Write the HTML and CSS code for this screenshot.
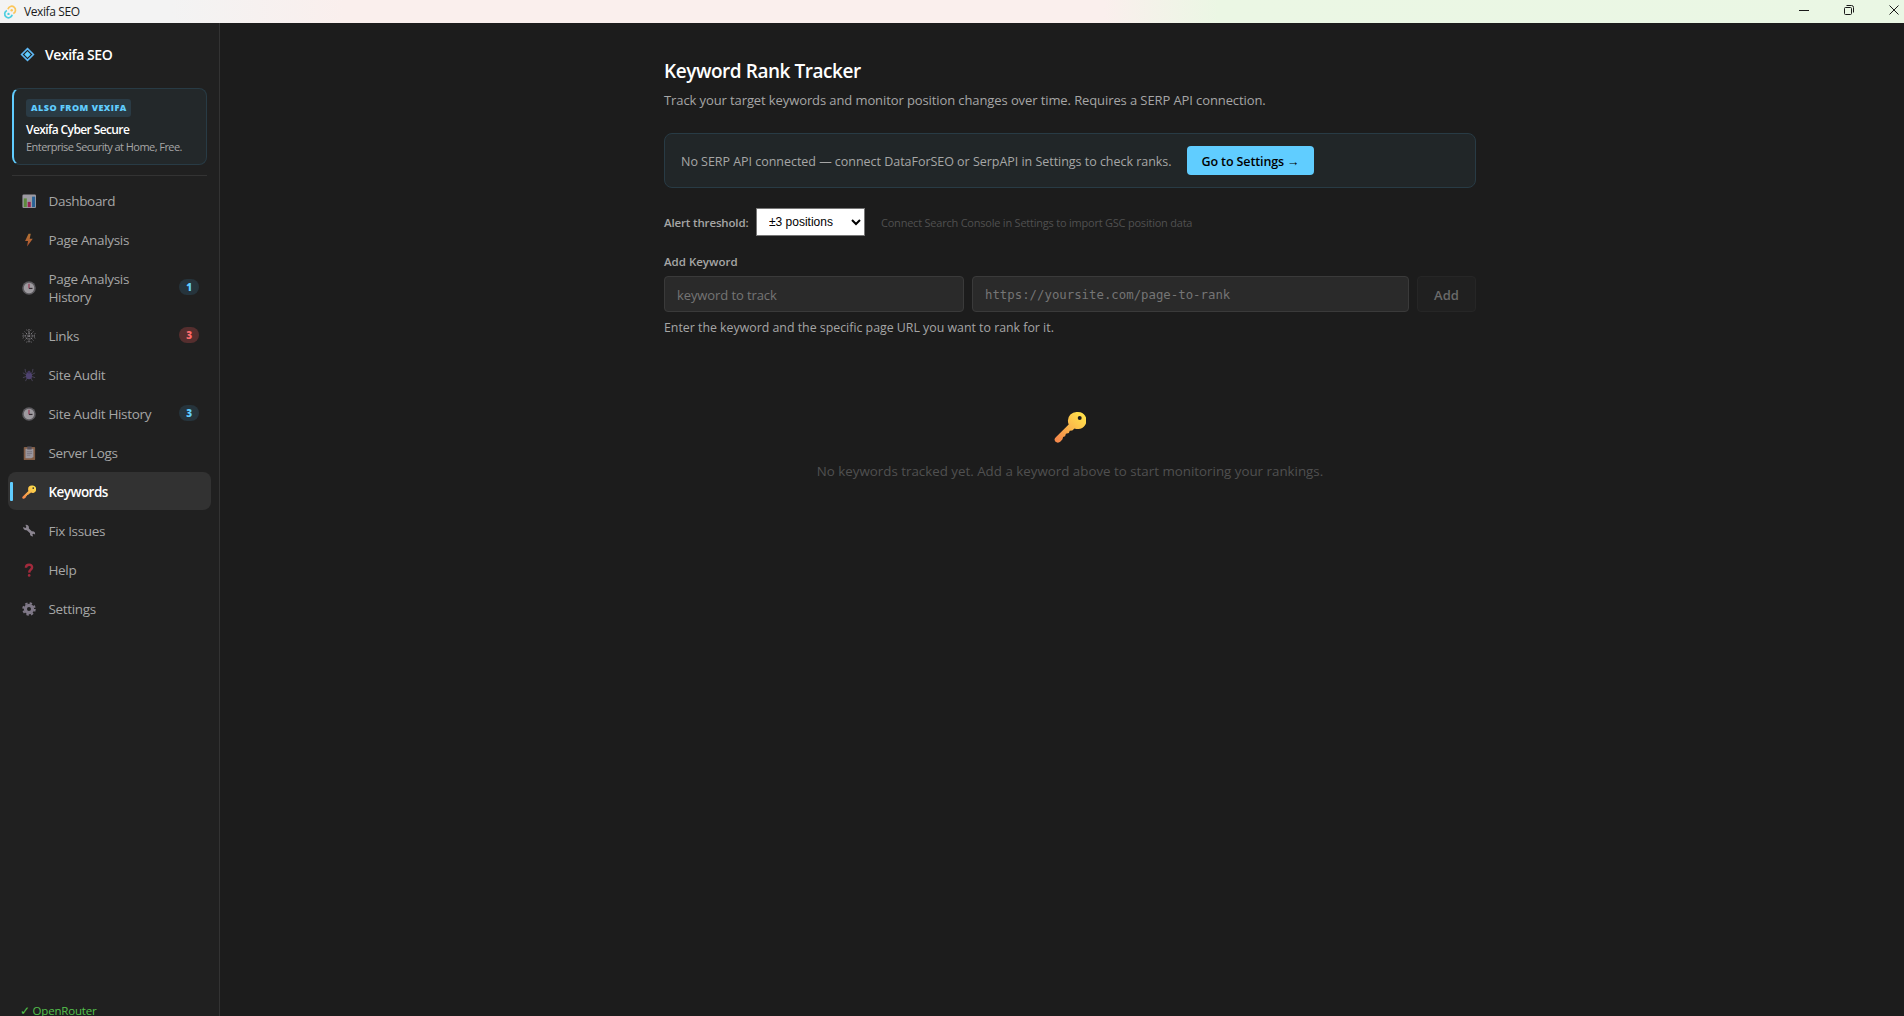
FILE: index.html
```html
<!DOCTYPE html>
<html lang="en">
<head>
    <meta charset="UTF-8">
    <meta name="viewport" content="width=device-width, initial-scale=1.0">
    <title>Vexifa SEO</title>
    <link rel="stylesheet" href="styles.css">
</head>
<body>
    <!-- Shared icons -->
    <svg class="sprite" aria-hidden="true">
        <defs>
            <linearGradient id="key-fill" x1="1" y1="0" x2="0" y2="1">
                <stop offset="0.1" stop-color="#ffe04a"/>
                <stop offset="0.5" stop-color="#fbb84b"/>
                <stop offset="0.9" stop-color="#f58a4b"/>
            </linearGradient>
            <linearGradient id="bolt-fill" x1="0" y1="0" x2="0" y2="1">
                <stop offset="0" stop-color="#ffa03e"/>
                <stop offset="1" stop-color="#ff6f3d"/>
            </linearGradient>
            <symbol id="i-key" viewBox="0 0 32 32">
                <path fill="url(#key-fill)" fill-rule="evenodd" d="M22.5 1a8.6 8.6 0 0 0-8.6 8.6c0 1.5.2 2.6.8 3.9L1.8 26.2A3.3 3.3 0 0 0 1.5 30.8c1.4 1.2 3.7 1.1 5-.3l2-2.2.6-2.3 2-.8.8-2.4 3-.8.8-2.2 2.6-.2 2.2-2.2a8.600 8.600 0 1 0 2-16.400zm3.200 4a2 2 0 1 1 0 4 2 2 0 0 1 0-4z"/>
            </symbol>
            <symbol id="i-clock" viewBox="0 0 16 16">
                <circle cx="8" cy="8" r="7.8" fill="#7d7a80"/>
                <circle cx="8" cy="8" r="6" fill="#e0dce4"/>
                <path d="M8 3v5.5" stroke="#d0305c" stroke-width="1.2"/>
                <path d="M8 8.5h4" stroke="#40363e" stroke-width="1.4"/>
            </symbol>
        </defs>
    </svg>

    <header class="titlebar">
        <svg class="app-icon" viewBox="0 0 14 16">
            <path d="M5 5.200A3.800 3.800 0 1 1 10.300 9.500" fill="none" stroke="#fbc65a" stroke-width="1.700"/>
            <circle cx="8.700" cy="6.200" r="1.200" fill="#fbc65a"/>
            <path d="M9.200 10.800A3.800 3.800 0 1 1 3.900 6.500" fill="none" stroke="#4dcfe0" stroke-width="1.700"/>
            <circle cx="5.500" cy="9.900" r="1.200" fill="#4dcfe0"/>
        </svg>
        <span class="app-title">Vexifa SEO</span>
        <div class="window-controls">
            <svg viewBox="0 0 12 12"><path d="M1 6.500h10"/></svg>
            <svg viewBox="0 0 12 12"><rect x="1.500" y="3.500" width="7" height="7" rx="1"/><path d="M3.500 1.500h5a2 2 0 0 1 2 2v5"/></svg>
            <svg viewBox="0 0 12 12"><path d="M1.500 1.500l9 9M10.500 1.500l-9 9"/></svg>
        </div>
    </header>

    <div class="app">
        <aside class="sidebar">
            <div class="brand">
                <svg class="brand-icon" viewBox="0 0 14 14">
                    <path d="M7 1.500L12.500 7 7 12.500 1.500 7z" fill="none" stroke="#5eb8f5" stroke-width="1.500"/>
                    <path d="M7 4L10 7 7 10 4 7z" fill="#60cdff"/>
                </svg>
                <span class="brand-name">Vexifa SEO</span>
            </div>

            <a class="promo">
                <span class="promo-tag">ALSO FROM VEXIFA</span>
                <span class="promo-title">Vexifa Cyber Secure</span>
                <span class="promo-text">Enterprise Security at Home, Free.</span>
            </a>

            <nav class="nav">
                <a class="nav-item">
                    <svg class="nav-icon" viewBox="0 0 16 16"><rect x=".5" y=".5" width="15.500" height="15.500" rx="1.500" fill="#e0dce8"/><path d="M2 5h3.500v10H2z" fill="#7fc24c"/><path d="M6.500 9H10v6H6.500z" fill="#d6246e"/><path d="M11.500 3H15v12h-3.500z" fill="#2f86d6"/></svg>
                    <span class="nav-label">Dashboard</span>
                </a>
                <a class="nav-item">
                    <svg class="nav-icon" viewBox="0 0 16 16"><path d="M7.500.8L3.500 9h3.400L5.800 15.500 12.300 6.500H8.800L10 .8z" fill="url(#bolt-fill)"/></svg>
                    <span class="nav-label">Page Analysis</span>
                </a>
                <a class="nav-item">
                    <svg class="nav-icon"><use href="#i-clock"/></svg>
                    <span class="nav-label">Page Analysis History</span>
                    <span class="badge">1</span>
                </a>
                <a class="nav-item">
                    <svg class="nav-icon" viewBox="0 0 16 16"><path d="M8 0v16M.5 8h15M3 3l10 10M13 3L3 13M8 4.500l3 1 1 2.500-1 3-3 1-3-1-1-3 1-2.500zM5 1l3 1.500L11 1M1 5l1.500 3L1 11M15 5l-1.500 3L15 11M5 15l3-1 3 1" fill="none" stroke="#ded9e2" stroke-width=".9" stroke-dasharray="1.200 1.400"/></svg>
                    <span class="nav-label">Links</span>
                    <span class="badge badge-danger">3</span>
                </a>
                <a class="nav-item">
                    <svg class="nav-icon" viewBox="0 0 16 16"><path d="M6 6.500L4 4.500 3.500 1M5.500 8L1 5.500M5.500 9.500L1 11M6 11l-2 4M10 6.500l2-2L12.500 1M10.500 8L15 5.500M10.500 9.500L15 11M10 11l2 4" fill="none" stroke="#6b6288" stroke-width=".9"/><ellipse cx="8" cy="8.800" rx="3.500" ry="4" fill="#69569c"/><circle cx="8" cy="4.800" r="1.700" fill="#54437c"/></svg>
                    <span class="nav-label">Site Audit</span>
                </a>
                <a class="nav-item">
                    <svg class="nav-icon"><use href="#i-clock"/></svg>
                    <span class="nav-label">Site Audit History</span>
                    <span class="badge">3</span>
                </a>
                <a class="nav-item">
                    <svg class="nav-icon" viewBox="0 0 16 16"><rect x="2" y="1" width="13" height="15" rx="1" fill="#b8805c"/><path d="M4 3h9v9.500L10.500 14H4z" fill="#dcd6e2"/><path d="M6 .5h5V4H6z" fill="#746b78"/><path d="M5.500 6.500h6M5.500 8.500h6M5.500 10.500h4" stroke="#9a90a4" stroke-width=".8"/></svg>
                    <span class="nav-label">Server Logs</span>
                </a>
                <a class="nav-item active">
                    <svg class="nav-icon"><use href="#i-key"/></svg>
                    <span class="nav-label">Keywords</span>
                </a>
                <a class="nav-item">
                    <svg class="nav-icon" viewBox="0 0 16 16"><path d="M1.300 3.500l2.700 1 1-1.200L4 1c2.500-.3 4.400 1.500 3.900 4l3.600 3.500c2-.5 3.800 1 3.500 3.400l-2.100-.9-1.100 1 .9 2.100c-2.400.4-4-1.300-3.500-3.400L5.500 7.200C3.100 7.700 1.100 5.900 1.300 3.500z" fill="#c5bccd"/></svg>
                    <span class="nav-label">Fix Issues</span>
                </a>
                <a class="nav-item">
                    <svg class="nav-icon" viewBox="0 0 16 16"><path d="M4.500 5.500C4.500.8 12 .8 11.500 5.300 11.200 7.800 8.300 7.500 8.200 11" fill="none" stroke="#e8304c" stroke-width="2.800"/><circle cx="8.200" cy="14.200" r="1.500" fill="#e8304c"/></svg>
                    <span class="nav-label">Help</span>
                </a>
                <a class="nav-item">
                    <svg class="nav-icon" viewBox="0 0 16 16"><circle cx="8" cy="8" r="6.600" fill="none" stroke="#b3a8bf" stroke-width="2.200" stroke-dasharray="2.700 2.484"/><circle cx="8" cy="8" r="4.100" fill="none" stroke="#b3a8bf" stroke-width="3.600"/></svg>
                    <span class="nav-label">Settings</span>
                </a>
            </nav>

            <div class="provider">✓ OpenRouter</div>
        </aside>

        <main class="main">
            <div class="page">
                <h1>Keyword Rank Tracker</h1>
                <p class="subtitle">Track your target keywords and monitor position changes over time. Requires a SERP API connection.</p>

                <div class="notice">
                    <span class="notice-text">No SERP API connected — connect DataForSEO or SerpAPI in Settings to check ranks.</span>
                    <button class="btn-primary">Go to Settings →</button>
                </div>

                <div class="threshold">
                    <label class="label-threshold" for="threshold">Alert threshold:</label>
                    <select id="threshold">
                        <option>±3 positions</option>
                    </select>
                    <span class="hint">Connect Search Console in Settings to import GSC position data</span>
                </div>

                <label class="label-add" for="keyword">Add Keyword</label>
                <div class="add-row">
                    <input id="keyword" class="input-keyword" type="text" placeholder="keyword to track">
                    <input class="input-url" type="text" placeholder="https://yoursite.com/page-to-rank">
                    <button class="btn-add" disabled>Add</button>
                </div>
                <p class="help">Enter the keyword and the specific page URL you want to rank for it.</p>

                <div class="empty">
                    <svg class="empty-icon"><use href="#i-key"/></svg>
                    <p>No keywords tracked yet. Add a keyword above to start monitoring your rankings.</p>
                </div>
            </div>
        </main>
    </div>
</body>
</html>
```
FILE: styles.css
```css
* {
    box-sizing: border-box;
}
body {
    margin: 0;
    height: 100vh;
    overflow: hidden;
    display: flex;
    flex-direction: column;
    background: #1c1c1c;
    color: #a6a6a6;
    font-family: "Segoe UI", "Open Sans", "Noto Sans", sans-serif;
    font-size: 13px;
}
h1, p {
    margin: 0;
}
button, input {
    font-family: inherit;
}
.sprite {
    position: absolute;
    width: 0;
    height: 0;
}

/* Window title bar */
.titlebar {
    flex: none;
    display: flex;
    align-items: center;
    height: 23px;
    padding-left: 3px;
    background: linear-gradient(90deg, #f3f3f3 0%, #f3f3f3 9%, #faefed 18%, #faefed 58%, #ebf7e4 64%, #eaf7e4 100%);
    color: #1a1a1a;
}
.app-icon {
    width: 14px;
    height: 16px;
    margin-right: 7px;
}
.app-title {
    font-size: 12px;
    letter-spacing: -0.4px;
}
.window-controls {
    display: flex;
    gap: 33px;
    margin-left: auto;
    padding: 0 4px 3px 0;
}
.window-controls svg {
    width: 12px;
    height: 12px;
    fill: none;
    stroke: #1a1a1a;
    stroke-width: 1;
}

.app {
    flex: 1;
    display: flex;
    min-height: 0;
}

/* Sidebar */
.sidebar {
    flex: none;
    width: 220px;
    display: flex;
    flex-direction: column;
    background: #202020;
    border-right: 1px solid #333;
}
.brand {
    display: flex;
    align-items: center;
    height: 65px;
    padding: 0 0 2px 20px;
}
.brand-icon {
    width: 15px;
    height: 15px;
    margin-right: 10px;
}
.brand-name {
    color: #fff;
    font-size: 14px;
    font-weight: 600;
    letter-spacing: -0.45px;
}
.promo {
    display: flex;
    flex-direction: column;
    align-items: flex-start;
    height: 77px;
    margin: 0 12px;
    padding: 10px 12px;
    background: #23282a;
    border: 1px solid #283b45;
    border-left: 2px solid #60cdff;
    border-radius: 8px;
}
.promo-tag {
    padding: 0 4px 0 5px;
    background: #2a3b45;
    border-radius: 3px;
    color: #60cdff;
    font-size: 9px;
    font-weight: 800;
    line-height: 18px;
    letter-spacing: 0.5px;
}
.promo-title {
    margin-top: 5px;
    color: #fff;
    font-size: 12px;
    font-weight: 600;
    line-height: 16px;
    letter-spacing: -0.6px;
}
.promo-text {
    font-size: 11px;
    line-height: 17px;
    letter-spacing: -0.55px;
    white-space: nowrap;
}
.nav {
    display: flex;
    flex-direction: column;
    gap: 1px;
    margin: 10px 12px 0;
    padding-top: 5px;
    border-top: 1px solid #333;
}
.nav-item {
    display: flex;
    align-items: center;
    min-height: 38px;
    margin: 0 -4px;
    padding: 11px 12px 9px 14px;
    border-radius: 8px;
    position: relative;
}
.nav-icon {
    flex: none;
    width: 14px;
    height: 14px;
    margin-right: 12.5px;
    opacity: 0.65;
}
.nav-label {
    max-width: 110px;
    font-size: 13.5px;
    line-height: 18px;
    letter-spacing: -0.33px;
}
.badge {
    margin-left: auto;
    margin-bottom: 2px;
    padding: 0 7px;
    background: #26343c;
    border-radius: 8px;
    color: #60cdff;
    font-size: 10px;
    font-weight: 800;
    line-height: 16px;
}
.badge-danger {
    background: #552e2e;
    color: #ff6b6b;
}
.nav-item.active {
    background: #323232;
}
.nav-item.active::before {
    content: "";
    position: absolute;
    left: 2px;
    top: 10px;
    width: 3px;
    height: 19px;
    background: #60cdff;
    border-radius: 1px;
}
.nav-item.active .nav-icon {
    opacity: 1;
}
.nav-item.active .nav-label {
    color: #fff;
    font-weight: 600;
    letter-spacing: -0.55px;
}
.provider {
    margin-top: auto;
    margin-bottom: -4px;
    padding-left: 20px;
    color: #54c04c;
    font-size: 11.5px;
    line-height: 18px;
    letter-spacing: -0.2px;
}

/* Keyword tracker */
.main {
    flex: 1;
    display: flex;
    justify-content: center;
    padding-left: 16px;
}
.page {
    width: 812px;
    padding-top: 34px;
}
h1 {
    color: #fff;
    font-size: 19px;
    font-weight: 600;
    line-height: 28px;
    letter-spacing: -0.45px;
}
.subtitle {
    margin-top: 5px;
    line-height: 20px;
    letter-spacing: -0.1px;
}
.notice {
    display: flex;
    align-items: center;
    height: 55px;
    margin-top: 23px;
    padding-left: 16px;
    background: #212628;
    border: 1px solid #283b45;
    border-radius: 8px;
}
.notice-text {
    width: 506px;
    padding-top: 2px;
    font-size: 12.5px;
    letter-spacing: -0.03px;
    white-space: nowrap;
}
.btn-primary {
    width: 127px;
    height: 29px;
    padding: 1px 0 0;
    background: #60cdff;
    border: 0;
    border-radius: 4px;
    color: #000;
    font-size: 12.5px;
    font-weight: 600;
    letter-spacing: -0.12px;
}
.threshold {
    display: flex;
    align-items: center;
    height: 28px;
    margin-top: 20px;
}
.label-threshold,
.label-add {
    font-size: 11.5px;
    font-weight: 600;
}
.label-threshold {
    width: 92px;
    padding-top: 1px;
    letter-spacing: -0.15px;
}
select {
    width: 109px;
    height: 28px;
    padding: 0 8px;
    background: #fff;
    border: 1px solid #767676;
    border-radius: 0;
    color: #000;
    font-family: Arial, "Liberation Sans", sans-serif;
    font-size: 12px;
}
.hint {
    margin-left: 16px;
    color: #505050;
    font-size: 11px;
    letter-spacing: -0.22px;
}
.label-add {
    display: block;
    margin-top: 17px;
    line-height: 18px;
}
.add-row {
    display: flex;
    gap: 8px;
    margin-top: 5px;
}
.add-row input,
.btn-add {
    height: 36px;
    background: #2a2a2a;
    border: 1px solid #3a3a3a;
    border-radius: 4px;
    font-size: 13px;
}
.add-row input {
    padding: 1px 12px 0;
}
.add-row input::placeholder {
    color: #757575;
}
.add-row .input-keyword {
    width: 300px;
    letter-spacing: -0.1px;
}
.add-row .input-url {
    width: 437px;
    font-family: Consolas, "DejaVu Sans Mono", monospace;
    font-size: 12.35px;
}
.btn-add {
    width: 59px;
    padding: 2px 0 0;
    background: #202020;
    border-color: #262626;
    color: #6a6a6a;
    font-weight: 600;
}
.help {
    margin-top: 7px;
    font-size: 12.35px;
    line-height: 18px;
}
.empty {
    display: flex;
    flex-direction: column;
    align-items: center;
    margin-top: 74px;
    color: #505050;
}
.empty-icon {
    width: 32px;
    height: 32px;
}
.empty p {
    margin-top: 18px;
    font-size: 13.33px;
    line-height: 20px;
}
```
